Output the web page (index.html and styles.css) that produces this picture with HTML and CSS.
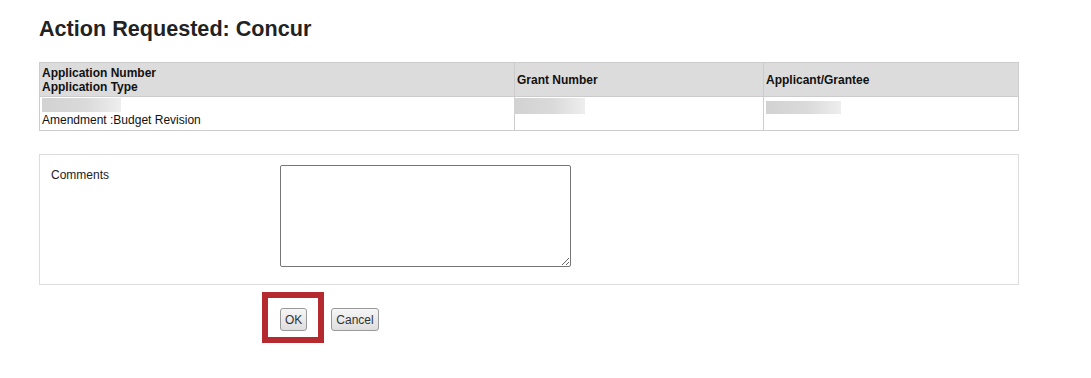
FILE: index.html
```html
<!DOCTYPE html>
<html lang="en">
<head>
  <meta charset="UTF-8">
  <title>Action Requested: Concur</title>
  <link rel="stylesheet" href="styles.css">
</head>
<body>
  <div class="page">
    <h1 class="page-title">Action Requested: Concur</h1>

    <table class="app-table">
      <thead>
        <tr>
          <th class="col-app">Application Number<br>Application Type</th>
          <th class="col-grant">Grant Number</th>
          <th>Applicant/Grantee</th>
        </tr>
      </thead>
      <tbody>
        <tr>
          <td>
            <span class="redacted redacted-app"></span><br>
            Amendment :Budget Revision
          </td>
          <td><span class="redacted redacted-grant"></span></td>
          <td><span class="redacted redacted-applicant"></span></td>
        </tr>
      </tbody>
    </table>

    <div class="comment-panel">
      <label class="comment-label" for="comments">Comments</label>
      <textarea id="comments" class="comment-box"></textarea>
    </div>

    <div class="action-row">
      <span class="highlight">
        <button class="btn">OK</button>
      </span>
      <button class="btn">Cancel</button>
    </div>
  </div>
</body>
</html>
```

FILE: styles.css
```css
body {
  margin: 0;
  font-family: "Liberation Sans", Arial, sans-serif;
  font-size: 12px;
  color: #000;
  background: #fff;
}

.page {
  width: 980px;
  margin-left: 39px;
  padding: 16px 0 40px;
}

.page-title {
  font-size: 21.6px;
  font-weight: bold;
  color: #222;
  margin: 0 0 21px;
  line-height: 25px;
}

.app-table {
  width: 980px;
  border-collapse: collapse;
  border: 1px solid #ccc;
}

.app-table th,
.app-table td {
  border: 1px solid #ccc;
  padding: 3px 2px 2px;
  text-align: left;
  vertical-align: middle;
  font-size: 12px;
  line-height: 14px;
}

.app-table th {
  background-color: #dcdcdc;
  font-weight: bold;
  color: #111;
}

.app-table td {
  vertical-align: top;
  padding: 1px 2px 2px;
  line-height: 15px;
  color: #111;
}

.col-app { width: 470px; }
.col-grant { width: 244px; }

.redacted {
  display: inline-block;
  height: 14px;
  vertical-align: top;
  background: linear-gradient(90deg, #d2d2d2, #dadada 55%, #eeeeee);
}
.redacted-app { width: 79px; }
.redacted-grant { width: 71px; height: 16px; margin-left: -3px; }
.redacted-applicant { width: 75px; height: 13px; margin-top: 3px; }

.comment-panel {
  margin-top: 23px;
  border: 1px solid #ddd;
  padding: 10px 11px 17px;
  display: grid;
  grid-template-columns: 229px 291px;
  align-items: start;
}

.comment-label {
  padding-top: 3px;
  color: #222;
}

.comment-box {
  box-sizing: border-box;
  width: 291px;
  height: 102px;
  margin: 0;
  border: 1px solid #767676;
  border-radius: 2px;
  display: block;
}

.action-row {
  padding: 23px 0 0 241px;
  display: flex;
  align-items: flex-start;
  gap: 24px;
}

.btn {
  font-family: "Liberation Sans", Arial, sans-serif;
  font-size: 12px;
  color: #333;
  height: 23px;
  padding: 0 4px;
  margin: 0;
  border: 1px solid #999;
  border-radius: 3px;
  background: linear-gradient(#f6f6f6, #dedede);
  display: block;
}

/* red annotation frame around OK */
.highlight {
  display: block;
  border: 6px solid #b52a2f;
  padding: 10px 11px 6px 12px;
  margin: -16px -17px -12px -18px;
}
```
